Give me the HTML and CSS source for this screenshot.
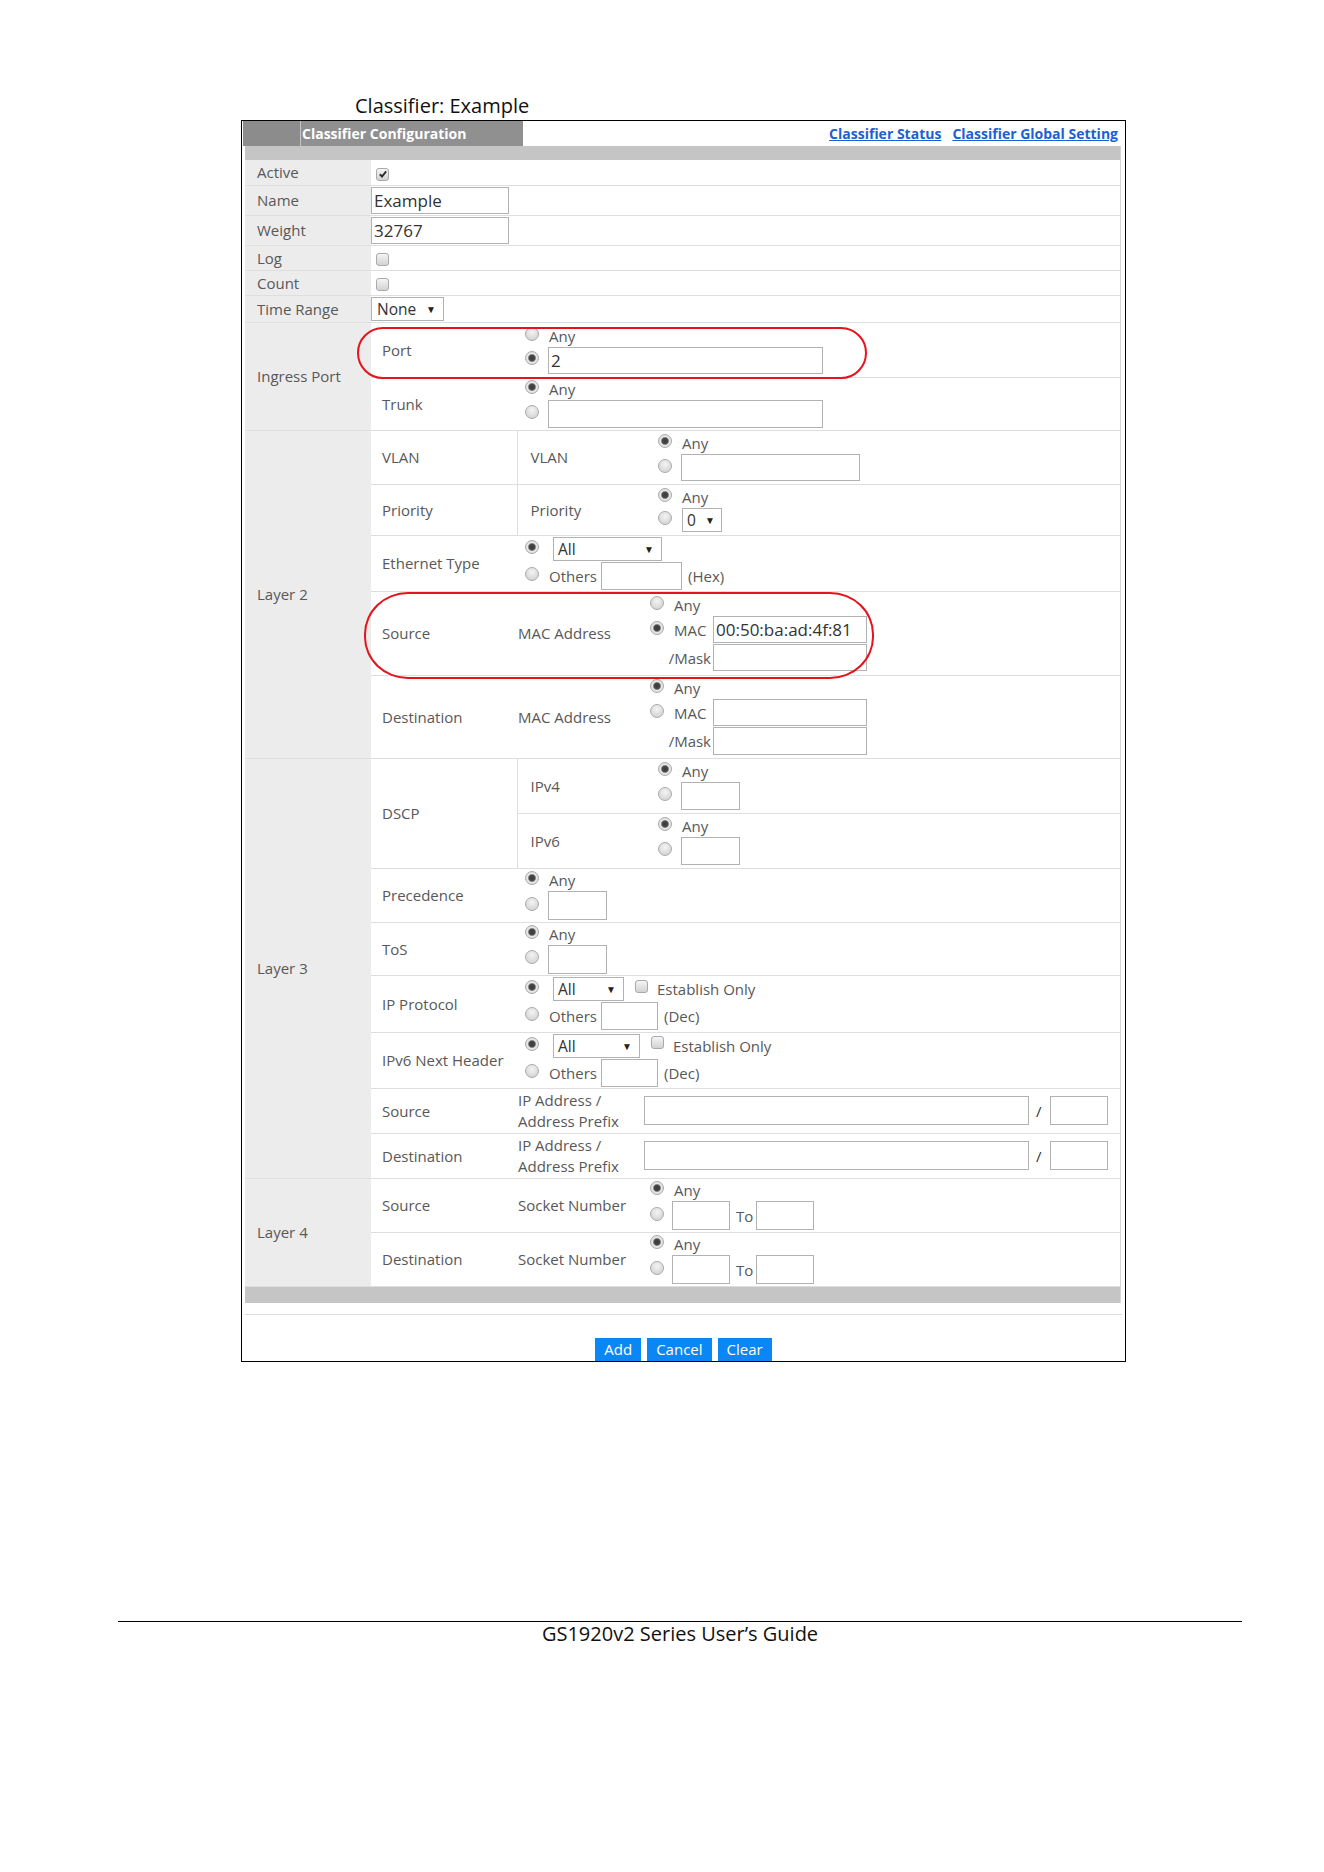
FILE: index.html
```html
<!DOCTYPE html>
<html lang="en">
<head>
<meta charset="utf-8">
<title>Classifier: Example</title>
<link rel="stylesheet" href="styles.css">
</head>
<body>
<div class="page">
  <h1 class="title">Classifier: Example</h1>
  <div class="panel">
    <div class="panel-head">
      <span class="head-block"></span>
      <span class="head-tab">Classifier Configuration</span>
      <nav class="head-links">
        <a href="#">Classifier Status</a>
        <a href="#">Classifier Global Setting</a>
      </nav>
    </div>
    <div class="panel-body">
      <div class="bar"></div>
      <table class="form">
        <colgroup><col class="c1"><col class="c2"><col class="c3"><col class="c4"></colgroup>
        <tr class="r25"><th>Active</th><td colspan="3" class="val"><span class="cb"><svg viewBox="0 0 12 12" width="10" height="10"><path d="M2.2 6.3 L4.8 9 L9.8 2.8" fill="none" stroke="#2b2b2b" stroke-width="2.2"/></svg></span></td></tr>
        <tr class="r30"><th>Name</th><td colspan="3" class="val0"><input class="tx w138" type="text" value="Example"></td></tr>
        <tr class="r30"><th>Weight</th><td colspan="3" class="val0"><input class="tx w138" type="text" value="32767"></td></tr>
        <tr class="r25"><th>Log</th><td colspan="3" class="val"><span class="cb"></span></td></tr>
        <tr class="r25"><th>Count</th><td colspan="3" class="val"><span class="cb"></span></td></tr>
        <tr class="r27"><th>Time Range</th><td colspan="3" class="val0"><span class="sel w73 pad-none">None<i class="arr">▼</i></span></td></tr>

        <tr class="r55"><th rowspan="2">Ingress Port</th><td class="sub">Port</td>
          <td colspan="2" class="oa"><div class="stack">
            <div class="opt"><input class="rd" type="radio" name="port">Any</div>
            <div class="opt"><input class="rd" type="radio" name="port" checked><input class="tx w275" type="text" value="2"></div>
          </div></td></tr>
        <tr class="r53"><td class="sub">Trunk</td>
          <td colspan="2" class="oa"><div class="stack">
            <div class="opt"><input class="rd" type="radio" name="trunk" checked>Any</div>
            <div class="opt"><input class="rd" type="radio" name="trunk"><input class="tx w275 h28" type="text"></div>
          </div></td></tr>

        <tr class="r54"><th rowspan="5">Layer 2</th><td class="sub">VLAN</td><td class="l3 vl">VLAN</td>
          <td class="oc"><div class="stack">
            <div class="opt"><input class="rd" type="radio" name="vlan" checked>Any</div>
            <div class="opt"><input class="rd" type="radio" name="vlan"><input class="tx w179" type="text"></div>
          </div></td></tr>
        <tr class="r51"><td class="sub">Priority</td><td class="l3 vl">Priority</td>
          <td class="oc"><div class="stack">
            <div class="opt"><input class="rd" type="radio" name="prio" checked>Any</div>
            <div class="opt"><input class="rd" type="radio" name="prio"><span class="sel w40 pad-zero">0<i class="arr">▼</i></span></div>
          </div></td></tr>
        <tr class="r56"><td class="sub">Ethernet Type</td>
          <td colspan="2" class="oa"><div class="stack">
            <div class="opt"><input class="rd" type="radio" name="eth" checked><span class="sel w109 shift">All<i class="arr">▼</i></span></div>
            <div class="opt"><input class="rd" type="radio" name="eth"><span class="others">Others</span><input class="tx w81 h28" type="text"><span class="after">(Hex)</span></div>
          </div></td></tr>
        <tr class="r84"><td class="sub">Source</td><td class="l3m">MAC Address</td>
          <td class="om"><div class="stack">
            <div class="opt"><input class="rd" type="radio" name="smac">Any</div>
            <div class="opt"><span class="lead"><input class="rd" type="radio" name="smac" checked>MAC</span><input class="tx w154" type="text" value="00:50:ba:ad:4f:81"></div>
            <div class="opt"><span class="lead mask">/Mask</span><input class="tx w154" type="text"></div>
          </div></td></tr>
        <tr class="r83"><td class="sub">Destination</td><td class="l3m">MAC Address</td>
          <td class="om"><div class="stack">
            <div class="opt"><input class="rd" type="radio" name="dmac" checked>Any</div>
            <div class="opt"><span class="lead"><input class="rd" type="radio" name="dmac">MAC</span><input class="tx w154" type="text"></div>
            <div class="opt"><span class="lead mask">/Mask</span><input class="tx w154 h28" type="text"></div>
          </div></td></tr>

        <tr class="r55"><th rowspan="8">Layer 3</th><td class="sub" rowspan="2">DSCP</td><td class="l3 vl">IPv4</td>
          <td class="oc"><div class="stack">
            <div class="opt"><input class="rd" type="radio" name="v4" checked>Any</div>
            <div class="opt"><input class="rd" type="radio" name="v4"><input class="tx w59 h28" type="text"></div>
          </div></td></tr>
        <tr class="r55"><td class="l3 vl">IPv6</td>
          <td class="oc"><div class="stack">
            <div class="opt"><input class="rd" type="radio" name="v6" checked>Any</div>
            <div class="opt"><input class="rd" type="radio" name="v6"><input class="tx w59 h28" type="text"></div>
          </div></td></tr>
        <tr class="r54"><td class="sub">Precedence</td>
          <td colspan="2" class="oa"><div class="stack">
            <div class="opt"><input class="rd" type="radio" name="prec" checked>Any</div>
            <div class="opt"><input class="rd" type="radio" name="prec"><input class="tx w59 h29" type="text"></div>
          </div></td></tr>
        <tr class="r53"><td class="sub">ToS</td>
          <td colspan="2" class="oa"><div class="stack">
            <div class="opt"><input class="rd" type="radio" name="tos" checked>Any</div>
            <div class="opt"><input class="rd" type="radio" name="tos"><input class="tx w59 h29" type="text"></div>
          </div></td></tr>
        <tr class="r57"><td class="sub">IP Protocol</td>
          <td colspan="2" class="oa"><div class="stack">
            <div class="opt"><input class="rd" type="radio" name="ipp" checked><span class="sel w71 shift">All<i class="arr">▼</i></span><span class="cb est"></span>Establish Only</div>
            <div class="opt"><input class="rd" type="radio" name="ipp"><span class="others">Others</span><input class="tx w57 h28" type="text"><span class="after">(Dec)</span></div>
          </div></td></tr>
        <tr class="r56"><td class="sub">IPv6 Next Header</td>
          <td colspan="2" class="oa"><div class="stack">
            <div class="opt"><input class="rd" type="radio" name="nh" checked><span class="sel w87 shift">All<i class="arr">▼</i></span><span class="cb est"></span>Establish Only</div>
            <div class="opt"><input class="rd" type="radio" name="nh"><span class="others">Others</span><input class="tx w57 h28" type="text"><span class="after">(Dec)</span></div>
          </div></td></tr>
        <tr class="r45"><td class="sub">Source</td><td class="l3m two">IP Address /<br>Address Prefix</td>
          <td class="oip"><div class="opt"><input class="tx w385 h29" type="text"><span class="slash">/</span><input class="tx w58 h29" type="text"></div></td></tr>
        <tr class="r45"><td class="sub">Destination</td><td class="l3m two">IP Address /<br>Address Prefix</td>
          <td class="oip"><div class="opt"><input class="tx w385 h29" type="text"><span class="slash">/</span><input class="tx w58 h29" type="text"></div></td></tr>

        <tr class="r54"><th rowspan="2">Layer 4</th><td class="sub">Source</td><td class="l3m">Socket Number</td>
          <td class="om"><div class="stack">
            <div class="opt"><input class="rd" type="radio" name="l4s" checked>Any</div>
            <div class="opt"><input class="rd rd10" type="radio" name="l4s"><input class="tx w58 h29" type="text"><span class="to">To</span><input class="tx w58 h29" type="text"></div>
          </div></td></tr>
        <tr class="r54"><td class="sub">Destination</td><td class="l3m">Socket Number</td>
          <td class="om"><div class="stack">
            <div class="opt"><input class="rd" type="radio" name="l4d" checked>Any</div>
            <div class="opt"><input class="rd rd10" type="radio" name="l4d"><input class="tx w58 h29" type="text"><span class="to">To</span><input class="tx w58 h29" type="text"></div>
          </div></td></tr>
      </table>
      <div class="bar bar-bottom"></div>
    </div>
    <div class="sep"></div>
    <div class="actions">
      <button class="btn" type="button">Add</button>
      <button class="btn" type="button">Cancel</button>
      <button class="btn" type="button">Clear</button>
    </div>
  </div>
  <div class="mark mark-port"></div>
  <div class="mark mark-mac"></div>
  <footer class="footer">GS1920v2 Series User’s Guide</footer>
</div>
</body>
</html>
```

FILE: styles.css
```css
* { box-sizing: border-box; }
html, body { margin: 0; padding: 0; background: #fff; }
body {
  font-family: "Open Sans", "Liberation Sans", Arial, sans-serif;
  color: #585858;
  width: 1324px;
}
.page { position: relative; padding-top: 93px; height: 1872px; overflow: hidden; }
.title {
  margin: 0 0 1px 355px;
  font-size: 20px;
  font-weight: normal;
  line-height: 26px;
  color: #111;
}
.panel { margin-left: 241px; width: 885px; border: 1px solid #000; }
.panel-head { display: flex; height: 25px; padding: 0 7px 0 1px; }
.head-block { width: 58px; background: #8c8c8c; border-right: 1px solid #c4c4c4; }
.head-tab {
  width: 222px;
  background: #909090;
  color: #fff;
  font-weight: 700;
  font-size: 14px;
  line-height: 25px;
  padding-left: 1px;
  white-space: nowrap;
}
.head-links { margin-left: auto; display: flex; gap: 11px; align-items: center; }
.head-links a { color: #1d60d4; font-weight: 700; font-size: 14px; text-decoration: underline; }
.panel-body { margin: 0 4px 0 3px; border-right: 1px solid #d6d6d6; }
.bar { height: 14px; background: #c5c5c5; }
.bar-bottom { height: 16px; }

.form { width: 875px; border-collapse: collapse; table-layout: fixed; font-size: 15px; }
.c1 { width: 126px; }
.c2 { width: 146px; }
.c3 { width: 127px; }
.c4 { width: 476px; }
.form th, .form td {
  padding: 0;
  border-bottom: 1px solid #dedede;
  vertical-align: middle;
  text-align: left;
  font-weight: normal;
  white-space: nowrap;
}
.form th { background: #ececec; padding-left: 12px; }
.r25 { height: 25px; } .r27 { height: 27px; } .r30 { height: 30px; }
.r45 { height: 45px; } .r51 { height: 51px; } .r53 { height: 53px; }
.r54 { height: 54px; } .r55 { height: 55px; } .r56 { height: 56px; }
.r57 { height: 57px; } .r83 { height: 83px; } .r84 { height: 84px; }

.form .sub { padding-left: 11px; }
.form .val { padding-left: 5px; }
.form .val0 { padding-left: 0; }
.form .oa { padding-left: 8px; }
.form .oc { padding-left: 14px; }
.form .om { padding-left: 6px; }
.form .oip { padding-left: 0; }
.form .l3 { padding-left: 13px; }
.form .l3m { padding-left: 1px; }
.form .vl { border-left: 1px solid #dedede; }
.two { line-height: 21px; }

.stack { display: flex; flex-direction: column; gap: 1px; }
.opt { display: flex; align-items: center; min-height: 20px; }

.rd {
  appearance: none;
  -webkit-appearance: none;
  flex: none;
  width: 14px;
  height: 14px;
  margin: 0 10px 0 0;
  border: 1px solid #acacac;
  border-radius: 50%;
  background: radial-gradient(circle at 50% 35%, #f4f4f4 0, #dedede 55%, #cbcbcb 100%);
  position: relative;
  top: -2px;
}
.rd:checked {
  background: radial-gradient(circle, #3a3a3a 0, #474747 2.8px, #8e8e8e 3.6px, #e8e8e8 4.4px, #cfcfcf 100%);
}
.opt .rd + .tx { margin-left: -1px; }
.rd10 { margin-right: 9px; }

.cb {
  flex: none;
  display: inline-flex;
  align-items: center;
  justify-content: center;
  width: 13px;
  height: 13px;
  border: 1px solid #aaaaaa;
  border-radius: 3px;
  background: linear-gradient(#f5f5f5, #d2d2d2);
  vertical-align: middle;
}
.cb.est { margin: 0 9px 0 11px; position: relative; top: -3px; }

.tx {
  flex: none;
  height: 27px;
  border: 1px solid #b2b2b2;
  border-radius: 0;
  background: #fff;
  padding: 0 2px;
  margin: 0;
  font-family: "Open Sans", "Liberation Sans", Arial, sans-serif;
  font-size: 17px;
  color: #333;
  outline: none;
}
.h28 { height: 28px; }
.h29 { height: 29px; }
.w40 { width: 40px; } .w57 { width: 57px; } .w58 { width: 58px; }
.w59 { width: 59px; } .w71 { width: 71px; } .w73 { width: 73px; }
.w81 { width: 81px; } .w87 { width: 87px; } .w109 { width: 109px; }
.w138 { width: 138px; } .w154 { width: 154px; } .w179 { width: 179px; }
.w275 { width: 275px; } .w385 { width: 385px; }

.sel {
  flex: none;
  display: inline-flex;
  align-items: center;
  justify-content: space-between;
  height: 24px;
  border: 1px solid #b2b2b2;
  background: #fff;
  padding: 0 7px 0 4px;
  color: #333;
  font-size: 15.5px;
  vertical-align: middle;
}
.sel.shift { margin-left: 4px; }
.pad-none { padding: 0 7px 0 5px; }
.pad-zero { padding: 0 6px 0 4px; }
.arr { font-style: normal; font-size: 10px; color: #222; }

.others { width: 52px; }
.after { margin-left: 6px; }
.lead { display: flex; align-items: center; width: 63px; }
.lead .rd { margin-right: 10px; }
.mask { justify-content: flex-end; padding-right: 2px; }
.slash { margin: 0 8px 0 7px; color: #333; }
.to { margin: 0 3px 0 6px; }

.sep { margin: 11px 3px 0 3px; border-top: 1px solid #dcdcdc; }
.actions { display: flex; justify-content: center; gap: 6px; padding-top: 23px; }
.btn {
  height: 23px;
  border: 0;
  padding: 0 9px;
  background: #0b86f5;
  color: #fff;
  font-family: "Open Sans", "Liberation Sans", Arial, sans-serif;
  font-size: 15px;
  line-height: 23px;
  cursor: pointer;
}

.mark { position: absolute; border: 2px solid #e5141c; }
.mark-port { left: 357px; top: 327px; width: 510px; height: 52px; border-radius: 26px; }
.mark-mac { left: 364px; top: 592px; width: 510px; height: 87px; border-radius: 44px / 42px; }

.footer {
  margin: 259px 0 0 118px;
  width: 1124px;
  border-top: 1px solid #000;
  text-align: center;
  font-size: 20px;
  line-height: 24px;
  color: #111;
}
```
